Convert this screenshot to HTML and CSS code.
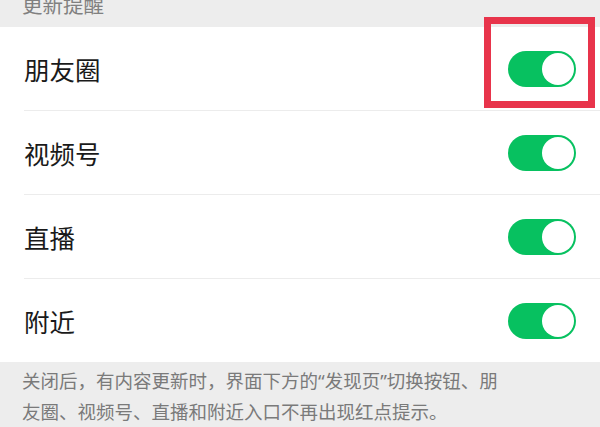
FILE: index.html
```html
<!DOCTYPE html>
<html>

<head>
    <title>更新提醒</title>
    <meta charset="UTF-8">
    <meta name="viewport" content="width=device-width, initial-scale=1.0">
    <link rel="stylesheet" href="styles.css">
</head>

<body>
    <div class="section-title">更新提醒</div>
    <ul class="setting-list">
        <li class="setting-row highlighted">
            <span class="label">朋友圈</span>
            <span class="switch on"><span class="knob"></span></span>
            <span class="mark-box"></span>
        </li>
        <li class="setting-row">
            <span class="label">视频号</span>
            <span class="switch on"><span class="knob"></span></span>
        </li>
        <li class="setting-row">
            <span class="label">直播</span>
            <span class="switch on"><span class="knob"></span></span>
        </li>
        <li class="setting-row">
            <span class="label">附近</span>
            <span class="switch on"><span class="knob"></span></span>
        </li>
    </ul>
    <p class="note">关闭后，有内容更新时，界面下方的“发现页”切换按钮、朋友圈、视频号、直播和附近入口不再出现红点提示。</p>
</body>

</html>
```

FILE: styles.css
```css
body {
    font-family: "Noto Sans CJK SC", "Noto Sans", sans-serif;
    margin: 0;
    padding: 0;
    background-color: #ededed;
    overflow: hidden;
}

.section-title {
    height: 27px;
    box-sizing: border-box;
    padding: 0 22px 12px;
    display: flex;
    align-items: flex-end;
    font-size: 20.5px;
    line-height: 22px;
    color: #808080;
    overflow: hidden;
}

.setting-list {
    list-style: none;
    margin: 0;
    padding: 0 0 0 24px;
    background-color: #fff;
}

.setting-row {
    position: relative;
    height: 83px;
    display: flex;
    align-items: center;
    justify-content: space-between;
    padding-right: 24px;
    border-bottom: 1px solid #ececec;
}

.setting-row:last-child {
    border-bottom: none;
}

.label {
    font-size: 25.5px;
    color: #1a1a1a;
}

.switch {
    width: 68px;
    height: 36px;
    border-radius: 18px;
    background-color: #d9d9d9;
    display: flex;
    align-items: center;
    padding: 2px;
    box-sizing: border-box;
}

.switch.on {
    background-color: #07c160;
    justify-content: flex-end;
}

.knob {
    width: 32px;
    height: 32px;
    border-radius: 50%;
    background-color: #fff;
}

.mark-box {
    position: absolute;
    top: -10px;
    right: 5px;
    width: 111px;
    height: 91px;
    box-sizing: border-box;
    border: 7px solid #e8344b;
}

/* latin font first so the quote marks stay narrow */
.note {
    margin: 0;
    padding: 4px 90px 0 22px;
    font-family: "Noto Sans", "Noto Sans CJK SC", sans-serif;
    font-size: 18.5px;
    line-height: 30.5px;
    color: #7a7a7a;
}
```
